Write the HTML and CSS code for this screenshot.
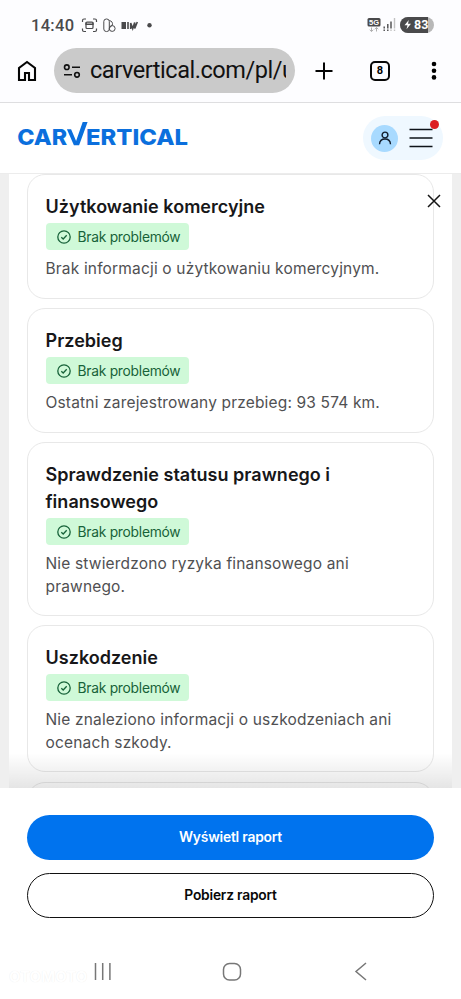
FILE: index.html
```html
<!DOCTYPE html>
<html lang="pl">
<head>
<meta charset="utf-8">
<title>carVertical</title>
<link rel="stylesheet" href="styles.css">
</head>
<body>
<svg class="defs" width="0" height="0"><symbol id="check" viewBox="0 0 14 14"><circle cx="7" cy="7" r="6.2"/><path d="M4.3 7.2l1.9 1.8 3.5-3.7"/></symbol></svg>
<div class="phone">
  <header class="status">
    <span class="time">14:40</span>
    <svg class="left-icons" width="76" height="18" viewBox="80 16 76 18">
      <g fill="none" stroke="#4a4a4c" stroke-width="1.2">
        <path d="M82.500 22v-1.500q0-1.500 1.500-1.500h2M93 19h2q1.500 0 1.500 1.500V22M96.500 28.500v1.500q0 1.500-1.500 1.500h-2M86 31.500h-2q-1.500 0-1.500-1.500v-1.500"/>
        <rect x="86" y="22" width="7" height="6.500" rx="1"/>
        <path d="M86 23h7v1.500h-7z"/>
        <rect x="103.800" y="19" width="5.500" height="12.500" rx="2.500" stroke-width="1"/>
        <path d="M109.300 20.500q4 1 3 4.500l-3 3" stroke-width="1"/>
        <circle cx="112.200" cy="28.500" r="2.900" stroke-width="1"/>
      </g>
      <path d="M121.500 22h4.500v7h-4.500z" fill="#4a4a4c"/>
      <path d="M128 22v7M130.700 29v-6l2 5.500 2-6v6l2.600-6.500" fill="none" stroke="#4a4a4c" stroke-width="1.600"/>
      <circle cx="149.500" cy="25.300" r="2.200" fill="#4a4a4c"/>
    </svg>
    <svg class="right-icons" width="68" height="18" viewBox="368 16 68 18">
      <rect x="368.500" y="18" width="13" height="8.500" rx="1.500" fill="#4a4a4c"/>
      <text x="370" y="25" class="five-g">5G</text>
      <path d="M372.500 27.500v4M370.700 29.800l1.800 1.700 1.800-1.700M377.500 31.500v-4M375.700 29.200l1.800-1.700 1.800 1.700" fill="none" stroke="#b0b0b0"/>
      <path d="M385.200 26.500v2M388.800 24v4.500M392 21.500v7M385.200 29.500v1.500M388.800 29.500v1.500" stroke="#4a4a4c" stroke-width="1.400"/>
      <path d="M392 29.500v1.500M395.500 18v10.500M395.500 29.500v1.500" stroke="#c2c2c2" stroke-width="1.400"/>
      <rect x="401" y="17" width="34" height="16" rx="8" fill="#b8b8b8"/>
      <path d="M409 17h20v16h-20a8 8 0 0 1 0-16z" fill="#4a4a4c"/>
      <path d="M409.800 20l-4.300 5.200h3l-1 4 4.500-5.400h-3z" fill="#fff"/>
      <text x="415" y="29.400" class="battery">83</text>
    </svg>
  </header>
  <nav class="browser">
    <svg width="22" height="24" viewBox="0 0 22 24"><path d="M3 21V9l8-6 8 6v12h-6v-7H9v7z" fill="none" stroke="#050505" stroke-width="2.100"/></svg>
    <div class="url">
      <svg width="18" height="16" viewBox="0 0 18 16" fill="none" stroke="#111" stroke-width="1.600"><circle cx="3.800" cy="4.200" r="2.300"/><path d="M9 4.200h8M1 11.800h8"/><circle cx="14" cy="11.800" r="2.300"/></svg>
      <span class="address">carvertical.com/pl/u</span>
    </div>
    <svg class="plus" width="18" height="18" viewBox="0 0 18 18"><path d="M9 .5v17M.5 9h17" stroke="#050505" stroke-width="2"/></svg>
    <span class="tabs">8</span>
    <svg class="dots" width="6" height="20" viewBox="0 0 6 20"><circle cx="3" cy="3" r="2.300"/><circle cx="3" cy="9.700" r="2.300"/><circle cx="3" cy="16.400" r="2.300"/></svg>
  </nav>
  <div class="site">
    <svg class="logo" width="172" height="32" viewBox="16 118 172 32">
      <text x="17.200" y="145.300" textLength="50" lengthAdjust="spacingAndGlyphs">CAR</text>
      <path d="M66.900 129.200h4.200l5 11.800 6.600-19h4.900l-8.500 23.300h-5.200z"/>
      <text x="86" y="145.300" textLength="102" lengthAdjust="spacingAndGlyphs">ERTICAL</text>
    </svg>
    <div class="account">
      <span class="avatar"><svg width="14" height="14" viewBox="0 0 14 14" fill="none" stroke="#111c2b" stroke-width="1.400"><circle cx="7" cy="4" r="2.900"/><path d="M1.500 13.300q.3-5.300 5.500-5.300t5.500 5.300"/></svg></span>
      <svg width="24" height="20" viewBox="0 0 24 20"><path d="M.5 1.500h23M.5 10h23M.5 18.500h23" stroke="#0e1319" stroke-width="1.700"/></svg>
      <i class="alert"></i>
    </div>
  </div>
  <main class="page">
    <svg class="close" width="14" height="14" viewBox="0 0 14 14"><path d="M1 1l12 12M13 1L1 13" stroke="#151515" stroke-width="1.500"/></svg>
    <section class="card"><h2>Użytkowanie komercyjne</h2><div class="badge"><svg width="14" height="14"><use href="#check"/></svg>Brak problemów</div><p>Brak informacji o użytkowaniu komercyjnym.</p></section>
    <section class="card"><h2>Przebieg</h2><div class="badge"><svg width="14" height="14"><use href="#check"/></svg>Brak problemów</div><p>Ostatni zarejestrowany przebieg: 93 574 km.</p></section>
    <section class="card"><h2>Sprawdzenie statusu prawnego i<br>finansowego</h2><div class="badge"><svg width="14" height="14"><use href="#check"/></svg>Brak problemów</div><p>Nie stwierdzono ryzyka finansowego ani<br>prawnego.</p></section>
    <section class="card"><h2>Uszkodzenie</h2><div class="badge"><svg width="14" height="14"><use href="#check"/></svg>Brak problemów</div><p>Nie znaleziono informacji o uszkodzeniach ani<br>ocenach szkody.</p></section>
    <section class="card"></section>
  </main>
  <footer class="actions">
    <button class="primary">Wyświetl raport</button>
    <button class="secondary">Pobierz raport</button>
  </footer>
  <div class="system">
    <span class="watermark">OTOMOTO</span>
    <svg width="18" height="20" viewBox="0 0 18 20"><path d="M1.500 1v17M8.700 1v17M15.900 1v17"/></svg>
    <svg width="20" height="20" viewBox="0 0 20 20"><rect x="1.500" y="1.500" width="17" height="16.500" rx="6"/></svg>
    <svg width="14" height="20" viewBox="0 0 14 20"><path d="M12 1L2 9.500 12 18"/></svg>
  </div>
</div>
</body>
</html>
```
FILE: styles.css
```css
* { box-sizing: border-box; }
body { margin: 0; background: #fff; font-family: Inter, "Noto Sans", sans-serif; }
svg { display: block; flex: none; }
.defs { position: absolute; }
.phone { width: 461px; height: 999px; overflow: hidden; display: flex; flex-direction: column; }
.status { height: 48px; padding: 16px 26px 0 31px; display: flex; background: #fdfdff; flex: none; }
.time { width: 49px; font: 500 16.500px/19px Roboto, sans-serif; color: #4a4a4c; letter-spacing: .3px; }
.right-icons { margin-left: auto; }
.five-g { font: 700 7.500px "Liberation Sans", sans-serif; fill: #fff; }
.battery { font: 700 12.500px Roboto, sans-serif; fill: #fff; }
.browser { height: 55px; display: flex; background: #fdfdff; border-bottom: 1px solid #dedee0; padding: 0 0 0 16px; flex: none; }
.browser > svg:first-child { margin-top: 11px; }
.url { width: 241px; height: 45px; margin-left: 16px; padding: 0 9px; border-radius: 23px; background: #cacaca; display: flex; align-items: center; }
.address { margin-left: 9px; width: 196px; overflow: hidden; white-space: nowrap; font: 400 23.500px/45px Roboto, sans-serif; letter-spacing: -.45px; color: #111; }
.plus { margin: 14px 0 0 20px; }
.tabs { width: 20px; height: 20px; margin: 13px 0 0 37px; border: 2px solid #080808; border-radius: 5px; font: 700 11px/16px Roboto, sans-serif; text-align: center; }
.dots { margin: 13px 0 0 41px; }
.site { height: 71px; flex: none; border-bottom: 1px solid #ececec; padding: 13px 18px 0 16px; display: flex; }
.logo { margin-top: 2px; fill: #0b6fdd; font: 800 22px Inter, sans-serif; }
.account { width: 80px; height: 44px; margin-left: auto; border-radius: 22px; background: #eff8ff; display: flex; align-items: center; gap: 11px; padding-left: 8px; position: relative; }
.avatar { width: 27px; height: 27px; border-radius: 50%; background: #a8daff; display: grid; place-items: center; }
.alert { position: absolute; left: 67px; top: 4px; width: 9px; height: 9px; border-radius: 50%; background: #dc1d23; }
.page { height: 614px; flex: none; overflow: hidden; position: relative; border: solid #efefef; border-width: 0 9px; padding: 0 18px; display: flex; flex-direction: column; gap: 9.500px; }
.page::after { content: ""; position: absolute; left: -9px; right: -9px; bottom: 0; height: 35px; background: linear-gradient(transparent, rgba(0,0,0,.1)); }
.close { position: absolute; right: 11px; top: 20px; }
.card { flex: none; border: 1px solid #e8e8e8; border-radius: 18px; padding: 18px 17.500px 0; min-height: 124.500px; color: #171719; }
.card:nth-of-type(3) { height: 173.500px; }
.card:nth-of-type(4) { height: 147px; }
h2 { margin: 0; font: 600 18px/27px Inter, sans-serif; letter-spacing: .02px; white-space: nowrap; }
.badge { width: 143px; height: 27px; margin: 3px 0 8px; padding-left: 11px; border-radius: 4px; background: #cff9d8; color: #176239; display: flex; align-items: center; gap: 7px; font-size: 13.800px; letter-spacing: -.25px; white-space: nowrap; }
.badge svg { fill: none; stroke: #176239; stroke-width: 1.300; }
p { margin: 0; font-size: 15.500px; line-height: 22.500px; letter-spacing: .17px; color: #505052; white-space: nowrap; }
.actions { height: 157px; flex: none; padding: 27px 27px 0; display: flex; flex-direction: column; gap: 13px; }
button { height: 45px; flex: none; padding: 0 0 1px; border: 0; border-radius: 23px; font: 600 13.800px Inter, sans-serif; letter-spacing: -.2px; }
.primary { background: #0073ee; color: #fff; }
.secondary { background: #fff; border: 1.500px solid #111; color: #080808; }
.system { height: 54px; display: flex; padding: 17px 0 0 9px; fill: none; stroke: #777; stroke-width: 1.500; }
.watermark { width: 85px; padding-top: 6px; font: 700 15px/18px Inter, sans-serif; color: #fff; text-shadow: 0 0 1px #e9e9e9; }
.system svg:nth-of-type(2) { margin-left: 110px; }
.system svg:nth-of-type(3) { margin-left: 112px; }
```
